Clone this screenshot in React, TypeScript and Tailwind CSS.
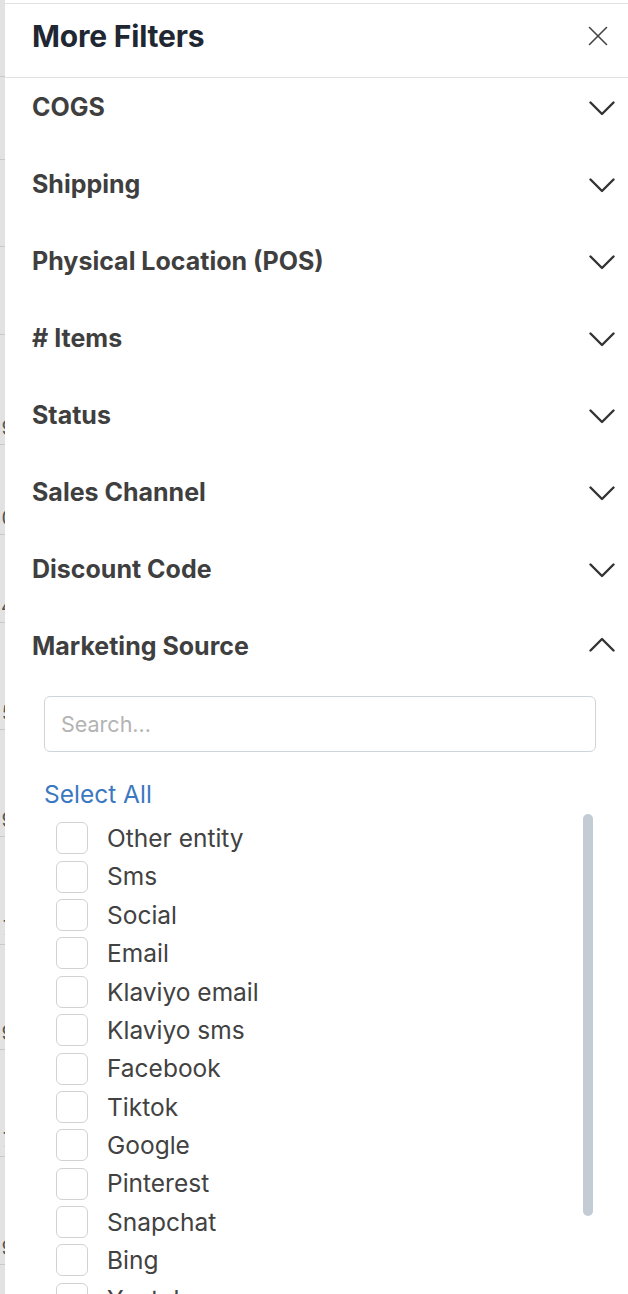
import React from "react";

const sections = [
  "COGS",
  "Shipping",
  "Physical Location (POS)",
  "# Items",
  "Status",
  "Sales Channel",
  "Discount Code",
];

const sources = [
  "Other entity",
  "Sms",
  "Social",
  "Email",
  "Klaviyo email",
  "Klaviyo sms",
  "Facebook",
  "Tiktok",
  "Google",
  "Pinterest",
  "Snapchat",
  "Bing",
  "Youtube",
];

// rows of the table peeking out behind the drawer
const strip = [
  { h: 77, d: "" },
  { h: 83, d: "" },
  { h: 87, d: "" },
  { h: 88, d: "" },
  { h: 110, d: "9" },
  { h: 90, d: "0" },
  { h: 88, d: "4" },
  { h: 107, d: "5" },
  { h: 107, d: "9" },
  { h: 108, d: "7" },
  { h: 105, d: "9" },
  { h: 107, d: "7" },
  { h: 108, d: "9" },
  { h: 60, d: "" },
];

function Chevron({ up = false }: { up?: boolean }) {
  return (
    <svg width="26" height="15" viewBox="0 0 26 15" fill="none" className="shrink-0">
      <path
        d={up ? "M1.5 13.5 L13 2 L24.5 13.5" : "M1.5 1.5 L13 13 L24.5 1.5"}
        stroke="#333"
        strokeWidth="2.4"
        strokeLinecap="round"
        strokeLinejoin="round"
      />
    </svg>
  );
}

function SectionRow({ title }: { title: string }) {
  return (
    <div className="flex h-[77px] shrink-0 items-start justify-between pt-[14px] pl-[27px] pr-[13px]">
      <span className="text-[25px] leading-[30px] font-bold text-[#3f3f3f]">{title}</span>
      <div className="mt-[9px]">
        <Chevron />
      </div>
    </div>
  );
}

export default function App() {
  return (
    <div
      className="flex h-[1294px] w-[628px] overflow-hidden bg-white"
      style={{ fontFamily: "Inter, 'Noto Sans', sans-serif" }}
    >
      {/* page behind the drawer */}
      <div className="flex w-[5px] shrink-0 flex-col overflow-hidden bg-[#e2e2e2]">
        {strip.map((r, i) => (
          <div
            key={i}
            style={{ height: r.h }}
            className="flex shrink-0 items-end justify-end border-b border-[#c9c9c9] pb-[6px]"
          >
            <span className="-mr-[9px] text-[20px] leading-none text-[#555]">{r.d}</span>
          </div>
        ))}
      </div>

      {/* drawer */}
      <div className="flex min-w-0 flex-1 flex-col overflow-hidden">
        <div className="mt-[3px] flex h-[75px] shrink-0 items-center justify-between border-y border-[#e2e2e2] pb-[10px] pl-[27px] pr-[20px]">
          <h1 className="text-[30px] leading-none font-bold tracking-[-0.2px] text-[#1f2733]">
            More Filters
          </h1>
          <svg width="20" height="20" viewBox="0 0 20 20" fill="none">
            <path d="M1.5 1.5 L18.5 18.5 M18.5 1.5 L1.5 18.5" stroke="#444" strokeWidth="1.6" strokeLinecap="round" />
          </svg>
        </div>

        {sections.map((s) => (
          <SectionRow key={s} title={s} />
        ))}

        <div className="flex shrink-0 flex-col">
          <div className="flex items-start justify-between pt-[14px] pl-[27px] pr-[13px]">
            <span className="text-[25px] leading-[30px] font-bold text-[#3f3f3f]">Marketing Source</span>
            <div className="mt-[6px]">
              <Chevron up />
            </div>
          </div>

          <div className="mt-[35px] pl-[39px] pr-[32px]">
            <div className="flex h-[56px] items-center rounded-[6px] border border-[#cfd4d8] px-[16px]">
              <span className="text-[21.5px] text-[#b3b3b3]">Search...</span>
            </div>
          </div>

          <div className="mt-[27px] pl-[39px]">
            <span className="text-[24.5px] leading-[30px] text-[#3b78bf]">Select All</span>
          </div>

          <div className="relative mt-[10px] flex flex-col pl-[51px]">
            {sources.map((src) => (
              <div key={src} className="flex h-[38.4px] shrink-0 items-center gap-[19px]">
                <div className="h-[32px] w-[32px] shrink-0 rounded-[6px] border border-[#d2d2d2] bg-white" />
                <span className="text-[24.5px] leading-none text-[#424242]">{src}</span>
              </div>
            ))}
            <div className="absolute right-[35px] top-[-5px] h-[402px] w-[10px] rounded-full bg-[#c3cbd4]" />
          </div>
        </div>
      </div>
    </div>
  );
}
